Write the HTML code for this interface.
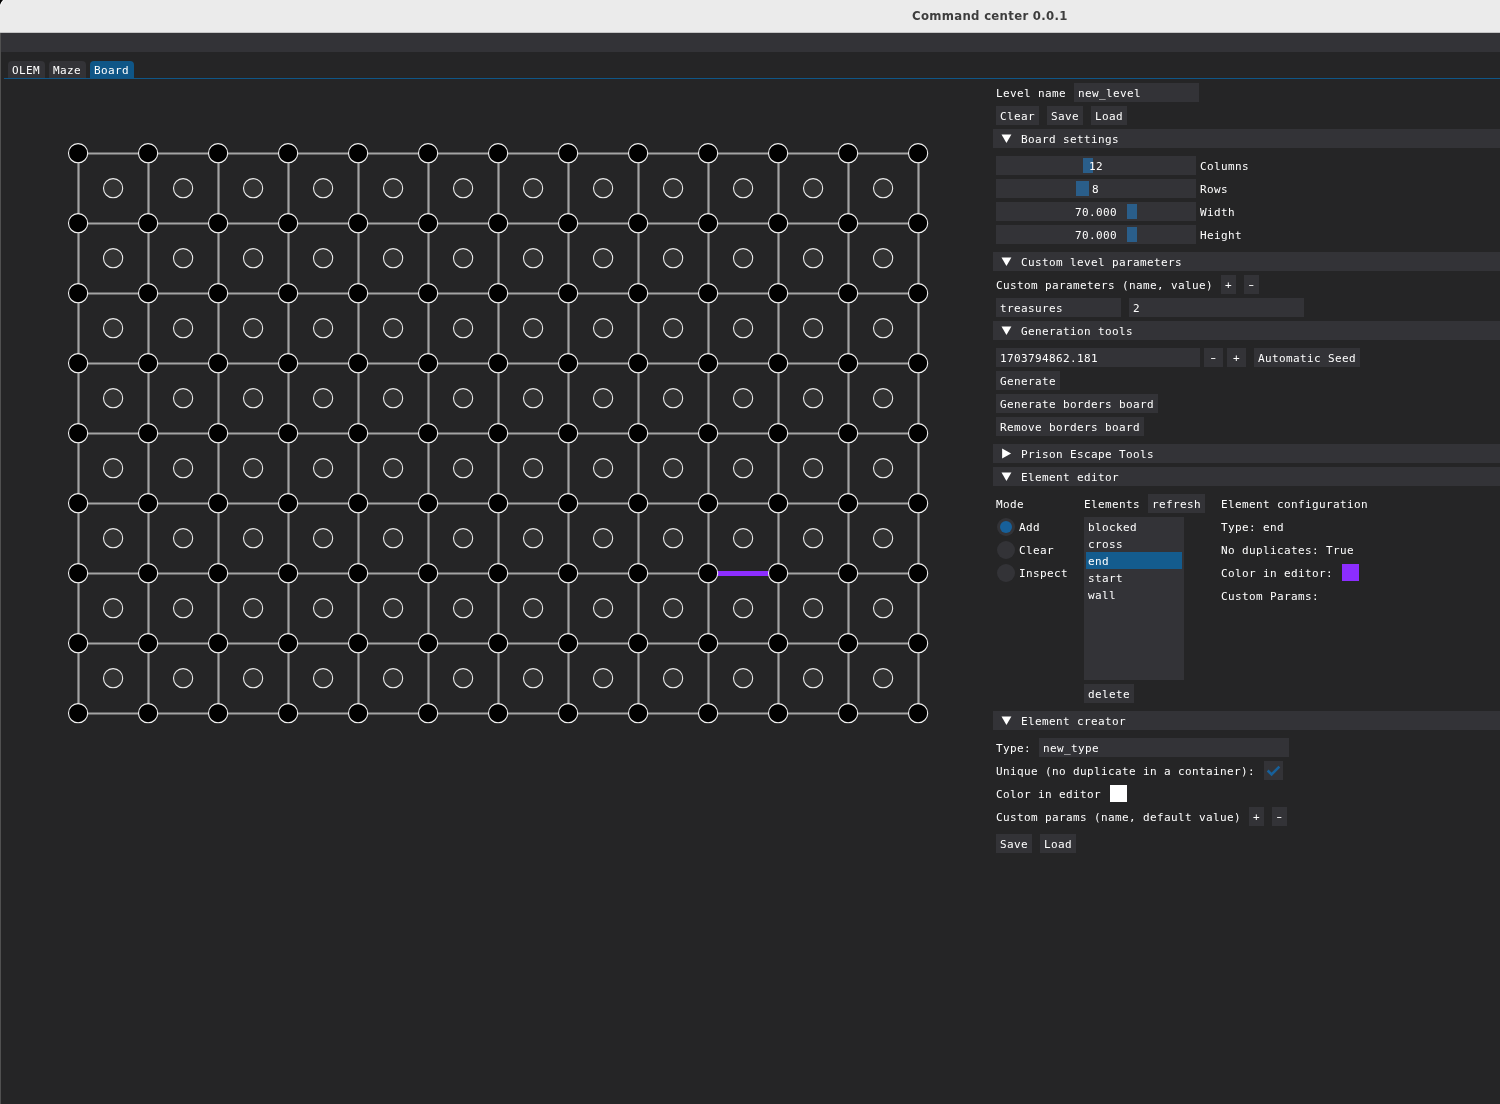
<!DOCTYPE html>
<html lang="en"><head><meta charset="utf-8"><title>Command center 0.0.1</title>
<style>
html,body{margin:0;padding:0}
body{width:1500px;height:1104px;background:#252526;position:relative;overflow:hidden;
 font-family:"DejaVu Sans Mono","Liberation Mono",monospace;font-size:11px;color:#fff;}
#root{position:absolute;left:0;top:0;width:1500px;height:1104px;will-change:transform;overflow:hidden}
.b,.t,.btn,.fld,.hdr,.tab,.radio,.board{position:absolute;box-sizing:border-box}
.t,.btn,.fld,.hdr,.tab{height:19px;line-height:21px;white-space:pre;letter-spacing:0.38px}
.btn{background:#333337;padding-left:4px}
.fld{background:#333337;padding-left:4px}
.hdr{left:993px;width:507px;background:#333337}
.hdr span{position:absolute;left:28px;top:0}
.hdr .arr{position:absolute;left:8px;top:4px}
.titlebar{position:absolute;left:0;top:0;width:1500px;height:33px;background:#ebebeb}
.title{position:absolute;left:912px;top:-0.4px;height:33px;line-height:32px;font-family:"DejaVu Sans Condensed","DejaVu Sans","Liberation Sans",sans-serif;font-weight:bold;font-size:13px;letter-spacing:0.31px;color:#3d3d3d;white-space:pre}
.menubar{position:absolute;left:0;top:33px;width:1500px;height:19px;background:#333337}
.lborder{position:absolute;left:0;top:33px;width:1px;height:1071px;background:#505050}
.tab{top:61px;height:17px;line-height:19px;background:#333337;border-radius:4px 4px 0 0;padding-left:4px;overflow:hidden}
.tab.act{background:#0f5687}
.tabline{position:absolute;left:4px;top:78px;width:1496px;height:1px;background:#0f5687}
.dash{display:inline-block;transform:translateY(-1px) scaleX(1.5)}
.radio{width:18px;height:18px;border-radius:50%;background:#333337}
.radio i{position:absolute;left:3px;top:3px;width:12px;height:12px;border-radius:50%;background:#17609a}
</style></head>
<body>
<div id="root">
<div class="titlebar"><span class="title">Command center 0.0.1</span></div>
<div class="menubar"></div>
<div class="b" style="left:0;top:32px;width:1500px;height:1px;background:#c4c4c5"></div>
<svg class="b" style="left:0;top:0" width="8" height="8" viewBox="0 0 8 8"><path d="M0 0 L3.2 0 Q0.9 1.9 0 5.2 Z" fill="#000"/><path d="M3.6 0 Q1.3 2.1 0.4 5.6" fill="none" stroke="#fff" stroke-width="0.8"/></svg>
<div class="lborder"></div>
<div class="tab" style="left:8px;width:37px">OLEM</div>
<div class="tab" style="left:49px;width:37px">Maze</div>
<div class="tab act" style="left:90px;width:44px">Board</div>
<div class="tabline"></div>
<svg class="board" width="960" height="680" viewBox="0 0 960 680" style="left:0;top:100px"><g stroke="#a4a4a4" stroke-width="2.2"><line x1="78" y1="53.5" x2="918" y2="53.5"/><line x1="78" y1="123.5" x2="918" y2="123.5"/><line x1="78" y1="193.5" x2="918" y2="193.5"/><line x1="78" y1="263.5" x2="918" y2="263.5"/><line x1="78" y1="333.5" x2="918" y2="333.5"/><line x1="78" y1="403.5" x2="918" y2="403.5"/><line x1="78" y1="473.5" x2="918" y2="473.5"/><line x1="78" y1="543.5" x2="918" y2="543.5"/><line x1="78" y1="613.5" x2="918" y2="613.5"/><line x1="78.5" y1="53" x2="78.5" y2="613"/><line x1="148.5" y1="53" x2="148.5" y2="613"/><line x1="218.5" y1="53" x2="218.5" y2="613"/><line x1="288.5" y1="53" x2="288.5" y2="613"/><line x1="358.5" y1="53" x2="358.5" y2="613"/><line x1="428.5" y1="53" x2="428.5" y2="613"/><line x1="498.5" y1="53" x2="498.5" y2="613"/><line x1="568.5" y1="53" x2="568.5" y2="613"/><line x1="638.5" y1="53" x2="638.5" y2="613"/><line x1="708.5" y1="53" x2="708.5" y2="613"/><line x1="778.5" y1="53" x2="778.5" y2="613"/><line x1="848.5" y1="53" x2="848.5" y2="613"/><line x1="918.5" y1="53" x2="918.5" y2="613"/></g><line x1="708" y1="473.5" x2="778" y2="473.5" stroke="#8c2dff" stroke-width="4.8"/><g fill="#333333" stroke="#ededed" stroke-width="1.1"><circle cx="113.1" cy="88.2" r="9.6"/><circle cx="183.1" cy="88.2" r="9.6"/><circle cx="253.1" cy="88.2" r="9.6"/><circle cx="323.1" cy="88.2" r="9.6"/><circle cx="393.1" cy="88.2" r="9.6"/><circle cx="463.1" cy="88.2" r="9.6"/><circle cx="533.1" cy="88.2" r="9.6"/><circle cx="603.1" cy="88.2" r="9.6"/><circle cx="673.1" cy="88.2" r="9.6"/><circle cx="743.1" cy="88.2" r="9.6"/><circle cx="813.1" cy="88.2" r="9.6"/><circle cx="883.1" cy="88.2" r="9.6"/><circle cx="113.1" cy="158.2" r="9.6"/><circle cx="183.1" cy="158.2" r="9.6"/><circle cx="253.1" cy="158.2" r="9.6"/><circle cx="323.1" cy="158.2" r="9.6"/><circle cx="393.1" cy="158.2" r="9.6"/><circle cx="463.1" cy="158.2" r="9.6"/><circle cx="533.1" cy="158.2" r="9.6"/><circle cx="603.1" cy="158.2" r="9.6"/><circle cx="673.1" cy="158.2" r="9.6"/><circle cx="743.1" cy="158.2" r="9.6"/><circle cx="813.1" cy="158.2" r="9.6"/><circle cx="883.1" cy="158.2" r="9.6"/><circle cx="113.1" cy="228.2" r="9.6"/><circle cx="183.1" cy="228.2" r="9.6"/><circle cx="253.1" cy="228.2" r="9.6"/><circle cx="323.1" cy="228.2" r="9.6"/><circle cx="393.1" cy="228.2" r="9.6"/><circle cx="463.1" cy="228.2" r="9.6"/><circle cx="533.1" cy="228.2" r="9.6"/><circle cx="603.1" cy="228.2" r="9.6"/><circle cx="673.1" cy="228.2" r="9.6"/><circle cx="743.1" cy="228.2" r="9.6"/><circle cx="813.1" cy="228.2" r="9.6"/><circle cx="883.1" cy="228.2" r="9.6"/><circle cx="113.1" cy="298.2" r="9.6"/><circle cx="183.1" cy="298.2" r="9.6"/><circle cx="253.1" cy="298.2" r="9.6"/><circle cx="323.1" cy="298.2" r="9.6"/><circle cx="393.1" cy="298.2" r="9.6"/><circle cx="463.1" cy="298.2" r="9.6"/><circle cx="533.1" cy="298.2" r="9.6"/><circle cx="603.1" cy="298.2" r="9.6"/><circle cx="673.1" cy="298.2" r="9.6"/><circle cx="743.1" cy="298.2" r="9.6"/><circle cx="813.1" cy="298.2" r="9.6"/><circle cx="883.1" cy="298.2" r="9.6"/><circle cx="113.1" cy="368.2" r="9.6"/><circle cx="183.1" cy="368.2" r="9.6"/><circle cx="253.1" cy="368.2" r="9.6"/><circle cx="323.1" cy="368.2" r="9.6"/><circle cx="393.1" cy="368.2" r="9.6"/><circle cx="463.1" cy="368.2" r="9.6"/><circle cx="533.1" cy="368.2" r="9.6"/><circle cx="603.1" cy="368.2" r="9.6"/><circle cx="673.1" cy="368.2" r="9.6"/><circle cx="743.1" cy="368.2" r="9.6"/><circle cx="813.1" cy="368.2" r="9.6"/><circle cx="883.1" cy="368.2" r="9.6"/><circle cx="113.1" cy="438.2" r="9.6"/><circle cx="183.1" cy="438.2" r="9.6"/><circle cx="253.1" cy="438.2" r="9.6"/><circle cx="323.1" cy="438.2" r="9.6"/><circle cx="393.1" cy="438.2" r="9.6"/><circle cx="463.1" cy="438.2" r="9.6"/><circle cx="533.1" cy="438.2" r="9.6"/><circle cx="603.1" cy="438.2" r="9.6"/><circle cx="673.1" cy="438.2" r="9.6"/><circle cx="743.1" cy="438.2" r="9.6"/><circle cx="813.1" cy="438.2" r="9.6"/><circle cx="883.1" cy="438.2" r="9.6"/><circle cx="113.1" cy="508.2" r="9.6"/><circle cx="183.1" cy="508.2" r="9.6"/><circle cx="253.1" cy="508.2" r="9.6"/><circle cx="323.1" cy="508.2" r="9.6"/><circle cx="393.1" cy="508.2" r="9.6"/><circle cx="463.1" cy="508.2" r="9.6"/><circle cx="533.1" cy="508.2" r="9.6"/><circle cx="603.1" cy="508.2" r="9.6"/><circle cx="673.1" cy="508.2" r="9.6"/><circle cx="743.1" cy="508.2" r="9.6"/><circle cx="813.1" cy="508.2" r="9.6"/><circle cx="883.1" cy="508.2" r="9.6"/><circle cx="113.1" cy="578.2" r="9.6"/><circle cx="183.1" cy="578.2" r="9.6"/><circle cx="253.1" cy="578.2" r="9.6"/><circle cx="323.1" cy="578.2" r="9.6"/><circle cx="393.1" cy="578.2" r="9.6"/><circle cx="463.1" cy="578.2" r="9.6"/><circle cx="533.1" cy="578.2" r="9.6"/><circle cx="603.1" cy="578.2" r="9.6"/><circle cx="673.1" cy="578.2" r="9.6"/><circle cx="743.1" cy="578.2" r="9.6"/><circle cx="813.1" cy="578.2" r="9.6"/><circle cx="883.1" cy="578.2" r="9.6"/></g><g fill="#000" stroke="#f2f2f2" stroke-width="1.1"><circle cx="78.1" cy="53.2" r="9.6"/><circle cx="148.1" cy="53.2" r="9.6"/><circle cx="218.1" cy="53.2" r="9.6"/><circle cx="288.1" cy="53.2" r="9.6"/><circle cx="358.1" cy="53.2" r="9.6"/><circle cx="428.1" cy="53.2" r="9.6"/><circle cx="498.1" cy="53.2" r="9.6"/><circle cx="568.1" cy="53.2" r="9.6"/><circle cx="638.1" cy="53.2" r="9.6"/><circle cx="708.1" cy="53.2" r="9.6"/><circle cx="778.1" cy="53.2" r="9.6"/><circle cx="848.1" cy="53.2" r="9.6"/><circle cx="918.1" cy="53.2" r="9.6"/><circle cx="78.1" cy="123.2" r="9.6"/><circle cx="148.1" cy="123.2" r="9.6"/><circle cx="218.1" cy="123.2" r="9.6"/><circle cx="288.1" cy="123.2" r="9.6"/><circle cx="358.1" cy="123.2" r="9.6"/><circle cx="428.1" cy="123.2" r="9.6"/><circle cx="498.1" cy="123.2" r="9.6"/><circle cx="568.1" cy="123.2" r="9.6"/><circle cx="638.1" cy="123.2" r="9.6"/><circle cx="708.1" cy="123.2" r="9.6"/><circle cx="778.1" cy="123.2" r="9.6"/><circle cx="848.1" cy="123.2" r="9.6"/><circle cx="918.1" cy="123.2" r="9.6"/><circle cx="78.1" cy="193.2" r="9.6"/><circle cx="148.1" cy="193.2" r="9.6"/><circle cx="218.1" cy="193.2" r="9.6"/><circle cx="288.1" cy="193.2" r="9.6"/><circle cx="358.1" cy="193.2" r="9.6"/><circle cx="428.1" cy="193.2" r="9.6"/><circle cx="498.1" cy="193.2" r="9.6"/><circle cx="568.1" cy="193.2" r="9.6"/><circle cx="638.1" cy="193.2" r="9.6"/><circle cx="708.1" cy="193.2" r="9.6"/><circle cx="778.1" cy="193.2" r="9.6"/><circle cx="848.1" cy="193.2" r="9.6"/><circle cx="918.1" cy="193.2" r="9.6"/><circle cx="78.1" cy="263.2" r="9.6"/><circle cx="148.1" cy="263.2" r="9.6"/><circle cx="218.1" cy="263.2" r="9.6"/><circle cx="288.1" cy="263.2" r="9.6"/><circle cx="358.1" cy="263.2" r="9.6"/><circle cx="428.1" cy="263.2" r="9.6"/><circle cx="498.1" cy="263.2" r="9.6"/><circle cx="568.1" cy="263.2" r="9.6"/><circle cx="638.1" cy="263.2" r="9.6"/><circle cx="708.1" cy="263.2" r="9.6"/><circle cx="778.1" cy="263.2" r="9.6"/><circle cx="848.1" cy="263.2" r="9.6"/><circle cx="918.1" cy="263.2" r="9.6"/><circle cx="78.1" cy="333.2" r="9.6"/><circle cx="148.1" cy="333.2" r="9.6"/><circle cx="218.1" cy="333.2" r="9.6"/><circle cx="288.1" cy="333.2" r="9.6"/><circle cx="358.1" cy="333.2" r="9.6"/><circle cx="428.1" cy="333.2" r="9.6"/><circle cx="498.1" cy="333.2" r="9.6"/><circle cx="568.1" cy="333.2" r="9.6"/><circle cx="638.1" cy="333.2" r="9.6"/><circle cx="708.1" cy="333.2" r="9.6"/><circle cx="778.1" cy="333.2" r="9.6"/><circle cx="848.1" cy="333.2" r="9.6"/><circle cx="918.1" cy="333.2" r="9.6"/><circle cx="78.1" cy="403.2" r="9.6"/><circle cx="148.1" cy="403.2" r="9.6"/><circle cx="218.1" cy="403.2" r="9.6"/><circle cx="288.1" cy="403.2" r="9.6"/><circle cx="358.1" cy="403.2" r="9.6"/><circle cx="428.1" cy="403.2" r="9.6"/><circle cx="498.1" cy="403.2" r="9.6"/><circle cx="568.1" cy="403.2" r="9.6"/><circle cx="638.1" cy="403.2" r="9.6"/><circle cx="708.1" cy="403.2" r="9.6"/><circle cx="778.1" cy="403.2" r="9.6"/><circle cx="848.1" cy="403.2" r="9.6"/><circle cx="918.1" cy="403.2" r="9.6"/><circle cx="78.1" cy="473.2" r="9.6"/><circle cx="148.1" cy="473.2" r="9.6"/><circle cx="218.1" cy="473.2" r="9.6"/><circle cx="288.1" cy="473.2" r="9.6"/><circle cx="358.1" cy="473.2" r="9.6"/><circle cx="428.1" cy="473.2" r="9.6"/><circle cx="498.1" cy="473.2" r="9.6"/><circle cx="568.1" cy="473.2" r="9.6"/><circle cx="638.1" cy="473.2" r="9.6"/><circle cx="708.1" cy="473.2" r="9.6"/><circle cx="778.1" cy="473.2" r="9.6"/><circle cx="848.1" cy="473.2" r="9.6"/><circle cx="918.1" cy="473.2" r="9.6"/><circle cx="78.1" cy="543.2" r="9.6"/><circle cx="148.1" cy="543.2" r="9.6"/><circle cx="218.1" cy="543.2" r="9.6"/><circle cx="288.1" cy="543.2" r="9.6"/><circle cx="358.1" cy="543.2" r="9.6"/><circle cx="428.1" cy="543.2" r="9.6"/><circle cx="498.1" cy="543.2" r="9.6"/><circle cx="568.1" cy="543.2" r="9.6"/><circle cx="638.1" cy="543.2" r="9.6"/><circle cx="708.1" cy="543.2" r="9.6"/><circle cx="778.1" cy="543.2" r="9.6"/><circle cx="848.1" cy="543.2" r="9.6"/><circle cx="918.1" cy="543.2" r="9.6"/><circle cx="78.1" cy="613.2" r="9.6"/><circle cx="148.1" cy="613.2" r="9.6"/><circle cx="218.1" cy="613.2" r="9.6"/><circle cx="288.1" cy="613.2" r="9.6"/><circle cx="358.1" cy="613.2" r="9.6"/><circle cx="428.1" cy="613.2" r="9.6"/><circle cx="498.1" cy="613.2" r="9.6"/><circle cx="568.1" cy="613.2" r="9.6"/><circle cx="638.1" cy="613.2" r="9.6"/><circle cx="708.1" cy="613.2" r="9.6"/><circle cx="778.1" cy="613.2" r="9.6"/><circle cx="848.1" cy="613.2" r="9.6"/><circle cx="918.1" cy="613.2" r="9.6"/></g></svg>
<div class="t" style="left:996px;top:83px;">Level name</div>
<div class="fld" style="left:1074px;top:83px;width:125px">new_level</div>
<div class="btn" style="left:996px;top:106px;width:43px">Clear</div>
<div class="btn" style="left:1047px;top:106px;width:36px">Save</div>
<div class="btn" style="left:1091px;top:106px;width:36px">Load</div>
<div class="hdr" style="top:129px"><svg class="arr" width="12" height="12" viewBox="0 0 12 12"><path d="M0.5 1.4 L10.4 1.4 L5.45 9.9 Z" fill="#fff"/></svg><span>Board settings</span></div>
<div class="b" style="left:996px;top:156px;width:200px;height:19px;background:#333337;"></div>
<div class="b" style="left:1083px;top:158px;width:10px;height:15px;background:#2a5e8a;"></div>
<div class="t" style="left:1089px;top:156px;">12</div>
<div class="t" style="left:1200px;top:156px;">Columns</div>
<div class="b" style="left:996px;top:179px;width:200px;height:19px;background:#333337;"></div>
<div class="b" style="left:1076px;top:181px;width:13px;height:15px;background:#2a5e8a;"></div>
<div class="t" style="left:1092px;top:179px;">8</div>
<div class="t" style="left:1200px;top:179px;">Rows</div>
<div class="b" style="left:996px;top:202px;width:200px;height:19px;background:#333337;"></div>
<div class="b" style="left:1127px;top:204px;width:10px;height:15px;background:#2a5e8a;"></div>
<div class="t" style="left:1075px;top:202px;">70.000</div>
<div class="t" style="left:1200px;top:202px;">Width</div>
<div class="b" style="left:996px;top:225px;width:200px;height:19px;background:#333337;"></div>
<div class="b" style="left:1127px;top:227px;width:10px;height:15px;background:#2a5e8a;"></div>
<div class="t" style="left:1075px;top:225px;">70.000</div>
<div class="t" style="left:1200px;top:225px;">Height</div>
<div class="hdr" style="top:252px"><svg class="arr" width="12" height="12" viewBox="0 0 12 12"><path d="M0.5 1.4 L10.4 1.4 L5.45 9.9 Z" fill="#fff"/></svg><span>Custom level parameters</span></div>
<div class="t" style="left:996px;top:275px;">Custom parameters (name, value)</div>
<div class="btn" style="left:1221px;top:275px;width:15px">+</div>
<div class="btn" style="left:1244px;top:275px;width:15px"><span class="dash">-</span></div>
<div class="fld" style="left:996px;top:298px;width:125px">treasures</div>
<div class="fld" style="left:1129px;top:298px;width:175px">2</div>
<div class="hdr" style="top:321px"><svg class="arr" width="12" height="12" viewBox="0 0 12 12"><path d="M0.5 1.4 L10.4 1.4 L5.45 9.9 Z" fill="#fff"/></svg><span>Generation tools</span></div>
<div class="fld" style="left:996px;top:348px;width:204px">1703794862.181</div>
<div class="btn" style="left:1204px;top:348px;width:19px;padding-left:6px"><span class="dash">-</span></div>
<div class="btn" style="left:1227px;top:348px;width:19px;padding-left:6px">+</div>
<div class="btn" style="left:1254px;top:348px;width:106px">Automatic Seed</div>
<div class="btn" style="left:996px;top:371px;width:64px">Generate</div>
<div class="btn" style="left:996px;top:394px;width:162px">Generate borders board</div>
<div class="btn" style="left:996px;top:417px;width:148px">Remove borders board</div>
<div class="hdr" style="top:444px"><svg class="arr" width="12" height="12" viewBox="0 0 12 12"><path d="M1.1 0.6 L1.1 10.5 L10.1 5.55 Z" fill="#fff"/></svg><span>Prison Escape Tools</span></div>
<div class="hdr" style="top:467px"><svg class="arr" width="12" height="12" viewBox="0 0 12 12"><path d="M0.5 1.4 L10.4 1.4 L5.45 9.9 Z" fill="#fff"/></svg><span>Element editor</span></div>
<div class="t" style="left:996px;top:494px;">Mode</div>
<div class="t" style="left:1084px;top:494px;">Elements</div>
<div class="btn" style="left:1148px;top:494px;width:57px">refresh</div>
<div class="t" style="left:1221px;top:494px;">Element configuration</div>
<div class="radio" style="left:997px;top:518px"><i></i></div>
<div class="t" style="left:1019px;top:517px;">Add</div>
<div class="radio" style="left:997px;top:541px"></div>
<div class="t" style="left:1019px;top:540px;">Clear</div>
<div class="radio" style="left:997px;top:564px"></div>
<div class="t" style="left:1019px;top:563px;">Inspect</div>
<div class="b" style="left:1084px;top:517px;width:100px;height:163px;background:#333337;"></div>
<div class="b" style="left:1086px;top:552px;width:96px;height:17px;background:#145c8e;"></div>
<div class="t" style="left:1088px;top:517px;height:17px;line-height:17px;margin-top:2px">blocked</div>
<div class="t" style="left:1088px;top:534px;height:17px;line-height:17px;margin-top:2px">cross</div>
<div class="t" style="left:1088px;top:551px;height:17px;line-height:17px;margin-top:2px">end</div>
<div class="t" style="left:1088px;top:568px;height:17px;line-height:17px;margin-top:2px">start</div>
<div class="t" style="left:1088px;top:585px;height:17px;line-height:17px;margin-top:2px">wall</div>
<div class="btn" style="left:1084px;top:684px;width:50px">delete</div>
<div class="t" style="left:1221px;top:517px;">Type: end</div>
<div class="t" style="left:1221px;top:540px;">No duplicates: True</div>
<div class="t" style="left:1221px;top:563px;">Color in editor:</div>
<div class="b" style="left:1342px;top:564px;width:17px;height:17px;background:#8c2dff;"></div>
<div class="t" style="left:1221px;top:586px;">Custom Params:</div>
<div class="hdr" style="top:711px"><svg class="arr" width="12" height="12" viewBox="0 0 12 12"><path d="M0.5 1.4 L10.4 1.4 L5.45 9.9 Z" fill="#fff"/></svg><span>Element creator</span></div>
<div class="t" style="left:996px;top:738px;">Type:</div>
<div class="fld" style="left:1039px;top:738px;width:250px">new_type</div>
<div class="t" style="left:996px;top:761px;">Unique (no duplicate in a container):</div>
<div class="b" style="left:1264px;top:761px;width:19px;height:19px;background:#333337;"></div>
<svg class="b" style="left:1264px;top:761px" width="19" height="19" viewBox="0 0 19 19"><path d="M3.65 9.5 L7.55 13.4 L15.35 5.6" fill="none" stroke="#17609a" stroke-width="2.5"/></svg>
<div class="t" style="left:996px;top:784px;">Color in editor</div>
<div class="b" style="left:1110px;top:785px;width:17px;height:17px;background:#ffffff;"></div>
<div class="t" style="left:996px;top:807px;">Custom params (name, default value)</div>
<div class="btn" style="left:1249px;top:807px;width:15px">+</div>
<div class="btn" style="left:1272px;top:807px;width:15px"><span class="dash">-</span></div>
<div class="btn" style="left:996px;top:834px;width:36px">Save</div>
<div class="btn" style="left:1040px;top:834px;width:36px">Load</div>
</div>
</body></html>
